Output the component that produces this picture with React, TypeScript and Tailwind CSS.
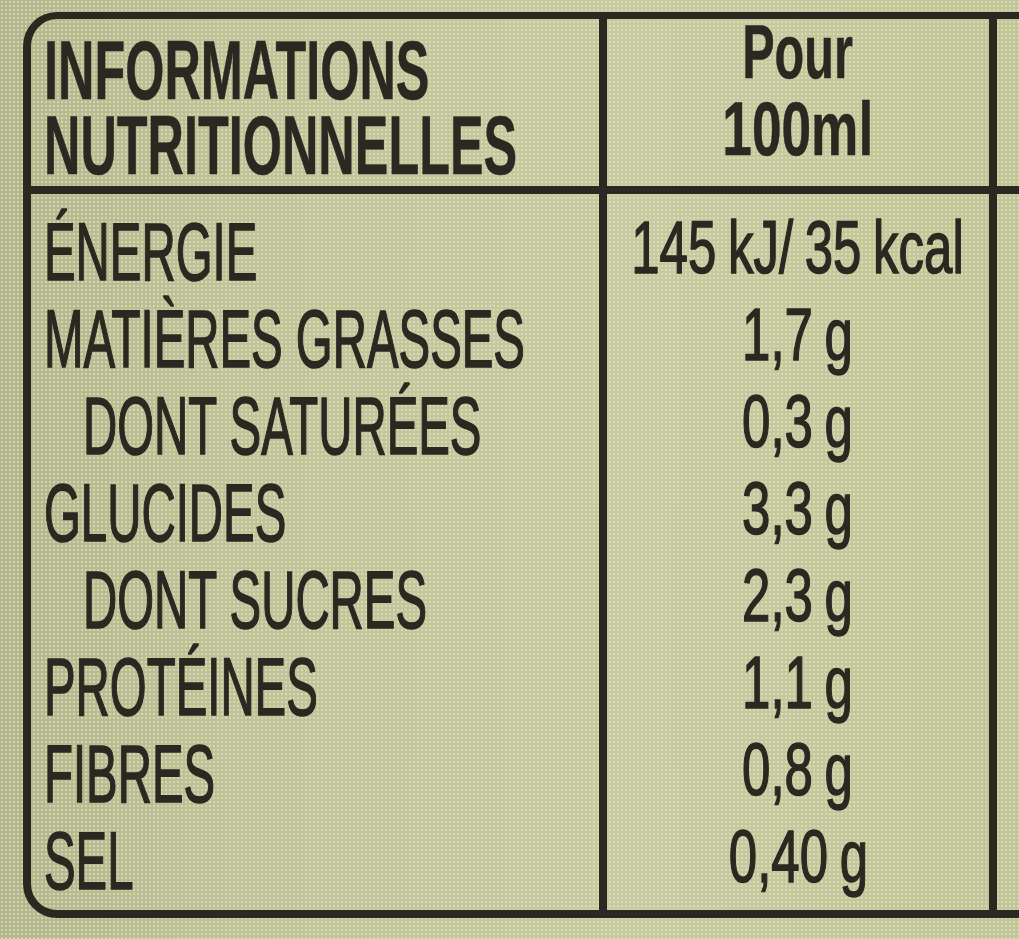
const rows = [
  { label: 'ÉNERGIE', value: '145 kJ/ 35 kcal', indent: false },
  { label: 'MATIÈRES GRASSES', value: '1,7 g', indent: false },
  { label: 'DONT SATURÉES', value: '0,3 g', indent: true },
  { label: 'GLUCIDES', value: '3,3 g', indent: false },
  { label: 'DONT SUCRES', value: '2,3 g', indent: true },
  { label: 'PROTÉINES', value: '1,1 g', indent: false },
  { label: 'FIBRES', value: '0,8 g', indent: false },
  { label: 'SEL', value: '0,40 g', indent: false },
];

export default function App() {
  return (
    <div className="relative w-[1019px] h-[939px] overflow-hidden bg-[#bfc398] text-[#2b2721] font-['Liberation_Sans',Arial,sans-serif] [background-image:radial-gradient(circle,rgba(232,236,200,0.55)_0.9px,transparent_1.6px),linear-gradient(90deg,#b1b68b_0%,#bec297_22%,#c6caa0_62%,#c0c496_100%)] [background-size:4px_4px,100%_100%]">
      {/* Table */}
      <div className="ml-[23px] mt-[12px] w-[1100px] border-l-8 border-t-[7px] border-b-8 border-[#2b2721] rounded-l-[34px]">
        {/* Header */}
        <div className="flex h-[175px] border-b-8 border-[#2b2721]">
          <div className="w-[576px] shrink-0 border-r-8 border-[#2b2721] pl-[13px] pt-[14px]">
            <div className="text-[84px] leading-[75px] font-bold whitespace-nowrap scale-x-[0.6] origin-left [-webkit-text-stroke:0.5px_#2b2721]">
              INFORMATIONS
              <br />
              NUTRITIONNELLES
            </div>
          </div>
          <div className="w-[390px] shrink-0 border-r-8 border-[#2b2721]">
            <div className="-mt-[6px] flex flex-col items-center text-[76px] leading-[77px] font-bold [-webkit-text-stroke:0.5px_#2b2721]">
              <div className="flex justify-center w-full">
                <span className="shrink-0 whitespace-nowrap scale-x-[0.64]">Pour</span>
              </div>
              <div className="flex justify-center w-full">
                <span className="shrink-0 whitespace-nowrap scale-x-[0.7]">100ml</span>
              </div>
            </div>
          </div>
          <div className="flex-1" />
        </div>

        {/* Body */}
        <div className="flex">
          <div className="w-[576px] shrink-0 border-r-8 border-[#2b2721] pl-[13px] pt-[15px] pb-[5px]">
            {rows.map((row) => (
              <div
                key={row.label}
                className={`h-[87px] text-[81px] leading-[87px] whitespace-nowrap ${row.indent ? 'pl-[39px]' : ''}`}
              >
                <div className="scale-x-[0.585] origin-left [-webkit-text-stroke:1.5px_#2b2721]">
                  {row.label}
                </div>
              </div>
            ))}
          </div>
          <div className="w-[390px] shrink-0 border-r-8 border-[#2b2721] pt-[10px] pb-[10px]">
            {rows.map((row) => (
              <div
                key={row.label}
                className="flex justify-center h-[87px] text-[75px] leading-[87px]"
              >
                <span className="shrink-0 whitespace-nowrap scale-x-[0.68] [word-spacing:-0.05em] [-webkit-text-stroke:1.5px_#2b2721]">
                  {row.value}
                </span>
              </div>
            ))}
          </div>
          <div className="flex-1" />
        </div>
      </div>
    </div>
  );
}
